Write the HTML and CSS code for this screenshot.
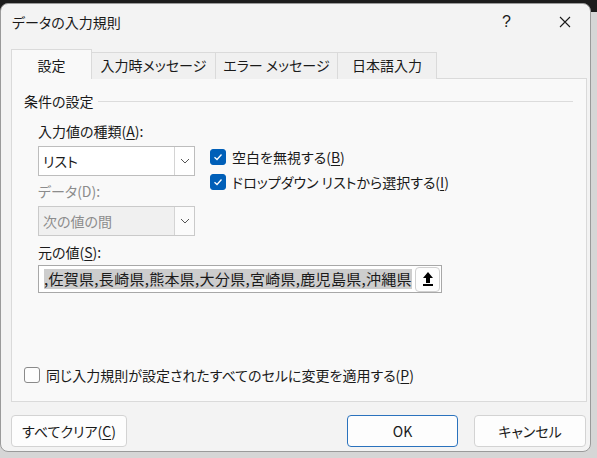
FILE: index.html
```html
<!DOCTYPE html>
<html lang="ja">
<head>
  <meta charset="UTF-8">
  <title>データの入力規則</title>
  <link rel="stylesheet" href="styles.css">
</head>
<body>

  <div class="dialog">
    <div class="titlebar">
      <span class="title">データの入力規則</span>
      <span class="help">?</span>
      <span class="close">
        <svg width="12" height="12" viewBox="0 0 12 12"><path d="M1 1L11 11M11 1L1 11" stroke="#1a1a1a" stroke-width="1.1" fill="none"/></svg>
      </span>
    </div>

    <div class="tabs">
      <div class="tab active">設定</div>
      <div class="tab">入力時メッセージ</div>
      <div class="tab">エラー メッセージ</div>
      <div class="tab">日本語入力</div>
    </div>

    <div class="panel">
      <div class="group-head">
        <span>条件の設定</span>
        <span class="rule"></span>
      </div>

      <div class="group-body">
        <div class="label">入力値の種類(<u>A</u>):</div>
        <div class="row">
          <div class="left">
            <div class="combo">
              <span class="value">リスト</span>
              <span class="drop"><svg width="10" height="6" viewBox="0 0 10 6"><path d="M1 1L5 5L9 1" stroke="#555" stroke-width="1" fill="none"/></svg></span>
            </div>
            <div class="label disabled">データ(D):</div>
            <div class="combo off">
              <span class="value">次の値の間</span>
              <span class="drop"><svg width="10" height="6" viewBox="0 0 10 6"><path d="M1 1L5 5L9 1" stroke="#555" stroke-width="1" fill="none"/></svg></span>
            </div>
          </div>
          <div class="checks">
            <label class="check"><span class="box on"><svg width="10" height="8" viewBox="0 0 10 8"><path d="M1.5 4.2L4 6.5L8.5 1.5" stroke="#fff" stroke-width="1.3" fill="none"/></svg></span>空白を無視する(<u>B</u>)</label>
            <label class="check"><span class="box on"><svg width="10" height="8" viewBox="0 0 10 8"><path d="M1.5 4.2L4 6.5L8.5 1.5" stroke="#fff" stroke-width="1.3" fill="none"/></svg></span>ドロップダウン リストから選択する(<u>I</u>)</label>
          </div>
        </div>

        <div class="label source-label">元の値(<u>S</u>):</div>
        <div class="source">
          <div class="source-text"><span class="sel">,佐賀県,長崎県,熊本県,大分県,宮崎県,鹿児島県,沖縄県</span></div>
          <span class="pick">
            <svg width="12" height="16" viewBox="0 0 12 16"><path d="M6 1L11 7H8V12H4V7H1Z" fill="#000"/><rect x="1" y="13" width="10" height="2" fill="#000"/></svg>
          </span>
        </div>
      </div>

      <label class="check apply"><span class="box"></span>同じ入力規則が設定されたすべてのセルに変更を適用する(<u>P</u>)</label>
    </div>

    <div class="buttons">
      <button class="btn clear">すべてクリア(<u>C</u>)</button>
      <span class="spacer"></span>
      <button class="btn ok">OK</button>
      <button class="btn">キャンセル</button>
    </div>
  </div>

</body>
</html>
```

FILE: styles.css
```css
body {
  margin: 0;
  width: 597px;
  height: 458px;
  overflow: hidden;
  background: linear-gradient(#1c1c1c 0 12px, #d6d6d6 12px);
  font-family: "Noto Sans CJK JP", "Noto Sans", sans-serif;
  font-size: 14px;
  font-feature-settings: "palt";
  color: #1a1a1a;
}

u {
  text-underline-offset: 2px;
}

.dialog {
  box-sizing: border-box;
  margin-top: 3px;
  width: 591px;
  height: 449px;
  background: #f3f3f3;
  border: 1px solid #9a9a9a;
  border-radius: 8px;
  display: flex;
  flex-direction: column;
  padding: 0 4px 0 10px;
}

.titlebar {
  height: 35px;
  display: flex;
  align-items: center;
}

.title {
  flex: 1;
  padding-left: 1px;
}

.help {
  font-family: "Liberation Sans", sans-serif;
  font-size: 16px;
  margin-right: 48px;
}

.close {
  display: flex;
  margin-right: 15px;
}

.tabs {
  display: flex;
  margin-top: 11px;
  height: 29px;
  align-items: flex-end;
  position: relative;
  z-index: 1;
}

.tab {
  box-sizing: border-box;
  height: 27px;
  line-height: 25px;
  padding: 0;
  white-space: nowrap;
  text-align: center;
  background: #f0f0f0;
  border: 1px solid #dadada;
  border-bottom: none;
  margin-left: -1px;
}

.tab.active {
  height: 30px;
  width: 81px;
  line-height: 30px;
  background: #f9f9f9;
  margin-left: 0;
}

.tabs .tab:nth-child(2) { width: 125px; }
.tabs .tab:nth-child(3) { width: 123px; }
.tabs .tab:nth-child(4) { width: 100px; }

.panel {
  box-sizing: border-box;
  height: 324px;
  margin-top: -1px;
  width: 576px;
  background: #f9f9f9;
  border: 1px solid #dadada;
  display: flex;
  flex-direction: column;
  padding: 12px 0 15px 12px;
}

.group-head {
  display: flex;
  align-items: center;
  height: 20px;
  margin-right: 13px;
}

.rule {
  flex: 1;
  height: 1px;
  background: #dcdcdc;
  margin-left: 4px;
}

.group-body {
  padding-left: 14px;
}

.label {
  height: 20px;
  line-height: 20px;
  margin-top: 10px;
}

.label.disabled {
  color: #8c8c8c;
  margin-top: 5px;
}

.row {
  display: flex;
  margin-top: 5px;
}

.left {
  width: 157px;
}

.combo {
  box-sizing: border-box;
  height: 30px;
  display: flex;
  background: #fff;
  border: 1px solid #bdbdbd;
}

.combo .value {
  flex: 1;
  line-height: 28px;
  padding-left: 4px;
}

.combo .drop {
  width: 19px;
  border-left: 1px solid #d4d4d4;
  display: flex;
  align-items: center;
  justify-content: center;
}

.combo.off {
  margin-top: 5px;
  background: #f0f0f0;
  color: #8c8c8c;
  border-color: #cacaca;
}

.combo.off .drop {
  background: #fbfbfb;
}

.checks {
  display: flex;
  flex-direction: column;
  padding-left: 15px;
  gap: 3px;
}

.check {
  display: flex;
  align-items: center;
  height: 22px;
  white-space: nowrap;
}

.box {
  box-sizing: border-box;
  width: 16px;
  height: 16px;
  border-radius: 3px;
  border: 1px solid #8a8a8a;
  background: #fdfdfd;
  margin-right: 6px;
  display: flex;
  align-items: center;
  justify-content: center;
}

.box.on {
  background: #005fb8;
  border-color: #005fb8;
}

.label.source-label {
  margin-top: 6px;
}

.source {
  box-sizing: border-box;
  margin-top: 3px;
  width: 404px;
  height: 28px;
  display: flex;
  align-items: center;
  background: #fff;
  border: 1px solid #a8a8a8;
}

.source-text {
  flex: 1;
  overflow: hidden;
  white-space: nowrap;
  padding-left: 5px;
}

.sel {
  background: #cdcdcd;
  font-size: 15px;
  line-height: 20px;
  letter-spacing: 0.3px;
}

.pick {
  box-sizing: border-box;
  width: 25px;
  height: 25px;
  margin-right: 1px;
  border: 1px solid #d0d0d0;
  border-radius: 4px;
  background: #fdfdfd;
  display: flex;
  align-items: center;
  justify-content: center;
}

.apply {
  margin-top: auto;
}

.buttons {
  display: flex;
  margin-top: 13px;
}

.spacer {
  flex: 1;
}

.btn {
  box-sizing: border-box;
  height: 32px;
  font: inherit;
  color: #1a1a1a;
  background: #fdfdfd;
  border: 1px solid #d3d3d3;
  border-radius: 4px;
  padding: 0;
  width: 112px;
}

.btn.clear {
  width: 116px;
}

.btn.ok {
  width: 111px;
  margin-right: 16px;
  border-color: #2a72bd;
}
```
